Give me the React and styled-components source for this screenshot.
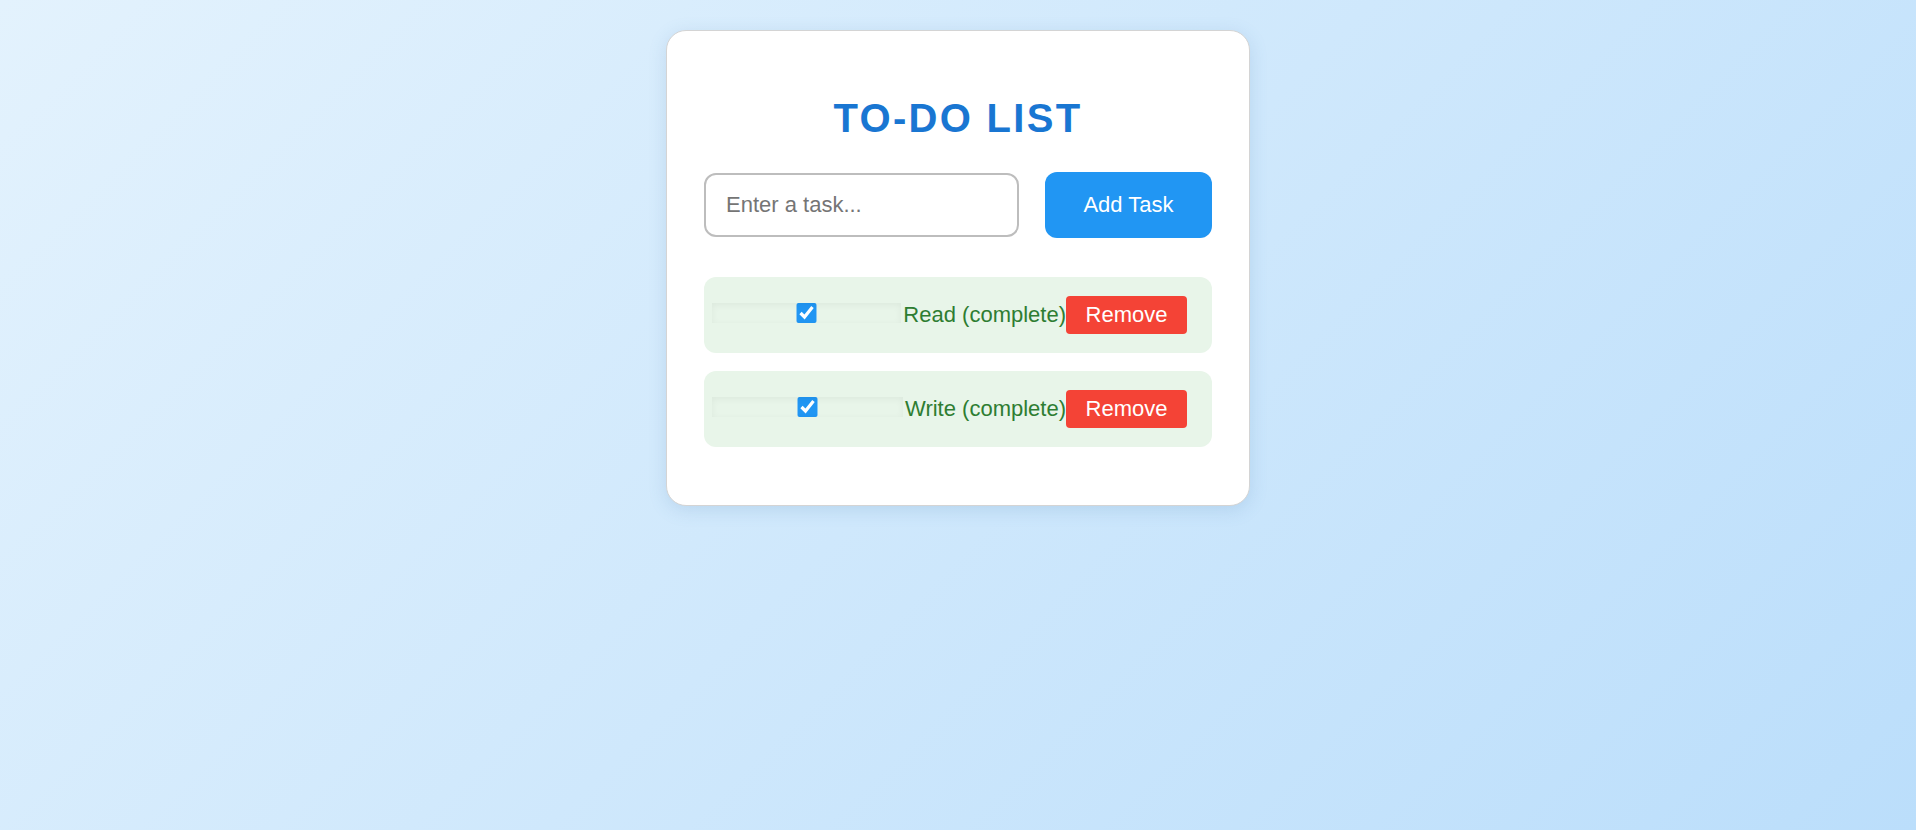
import React, { useState } from 'react';
import styled, { createGlobalStyle } from 'styled-components';

const GlobalStyle = createGlobalStyle`
  html, body {
    margin: 0;
    padding: 0;
  }
  body {
    font-family: "Liberation Sans", Arial, sans-serif;
    background: linear-gradient(135deg, #e3f2fd 0%, #bbdefb 100%);
    min-height: 100vh;
  }
`;

const Page = styled.div`
  min-height: 100vh;
  display: flex;
  justify-content: center;
  align-items: flex-start;
  padding-top: 30px;
  box-sizing: border-box;
`;

const Card = styled.div`
  width: 584px;
  box-sizing: border-box;
  background: #fff;
  border: 1px solid #d4d4d4;
  border-radius: 20px;
  padding: 37px 37px 38px;
  box-shadow: 0 4px 18px rgba(80, 130, 180, 0.18);
`;

const Title = styled.h1`
  margin: 27px 0 31px;
  font-size: 40px;
  line-height: 46px;
  font-weight: bold;
  letter-spacing: 2.3px;
  text-align: center;
  color: #1976d2;
`;

const InputRow = styled.div`
  display: flex;
  align-items: center;
  gap: 26px;
  height: 66px;
`;

const TaskInput = styled.input`
  width: 315px;
  height: 64px;
  box-sizing: border-box;
  border: 2px solid #bdbdbd;
  border-radius: 12px;
  padding: 0 20px;
  font-family: "Liberation Sans", Arial, sans-serif;
  font-size: 22px;
  color: #333;
  outline: none;
  &::placeholder {
    color: #757575;
  }
`;

const AddButton = styled.button`
  width: 167px;
  height: 66px;
  border: none;
  border-radius: 12px;
  background: #2196f3;
  color: #fff;
  font-family: "Liberation Sans", Arial, sans-serif;
  font-size: 22px;
  cursor: pointer;
`;

const List = styled.ul`
  list-style: none;
  margin: 39px 0 20px;
  padding: 0;
  display: flex;
  flex-direction: column;
  gap: 18px;
`;

const Item = styled.li`
  display: flex;
  align-items: center;
  height: 76px;
  box-sizing: border-box;
  padding: 0 25px 0 8px;
  background: #e8f5e9;
  border-radius: 12px;
`;

const Check = styled.input`
  flex: 1;
  height: 20px;
  margin: -4px 2px 0 0;
  accent-color: #2196f3;
  box-shadow: inset 0 2px 7px rgba(0, 0, 0, 0.05);
`;

const ItemText = styled.span`
  font-size: 22px;
  color: ${(p) => (p.$done ? '#2e7d32' : '#333')};
`;

const RemoveButton = styled.button`
  width: 121px;
  height: 38px;
  border: none;
  border-radius: 4px;
  background: #f44336;
  color: #fff;
  font-family: "Liberation Sans", Arial, sans-serif;
  font-size: 22px;
  cursor: pointer;
`;

export default function App() {
  const [tasks, setTasks] = useState([
    { id: 1, text: 'Read', done: true },
    { id: 2, text: 'Write', done: true },
  ]);
  const [value, setValue] = useState('');

  const add = () => {
    if (!value.trim()) return;
    setTasks([...tasks, { id: Date.now(), text: value.trim(), done: false }]);
    setValue('');
  };

  const toggle = (id) =>
    setTasks(tasks.map((t) => (t.id === id ? { ...t, done: !t.done } : t)));

  const remove = (id) => setTasks(tasks.filter((t) => t.id !== id));

  return (
    <>
      <GlobalStyle />
      <Page>
        <Card>
          <Title>TO-DO LIST</Title>
          <InputRow>
            <TaskInput
              placeholder="Enter a task..."
              value={value}
              onChange={(e) => setValue(e.target.value)}
            />
            <AddButton onClick={add}>Add Task</AddButton>
          </InputRow>
          <List>
            {tasks.map((task) => (
              <Item key={task.id}>
                <Check type="checkbox" checked={task.done} onChange={() => toggle(task.id)} />
                <ItemText $done={task.done}>
                  {task.text}
                  {task.done ? ' (complete)' : ''}
                </ItemText>
                <RemoveButton onClick={() => remove(task.id)}>Remove</RemoveButton>
              </Item>
            ))}
          </List>
        </Card>
      </Page>
    </>
  );
}
